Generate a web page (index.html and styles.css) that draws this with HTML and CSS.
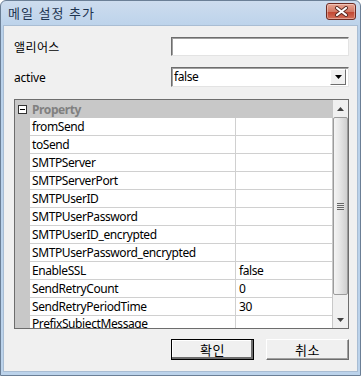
FILE: index.html
```html
<!DOCTYPE html>
<html lang="ko">
<head>
    <meta charset="UTF-8">
    <title>메일 설정 추가</title>
    <link rel="stylesheet" href="styles.css">
</head>
<body>
    <div class="window">
        <div class="titlebar">
            <span class="title">메일 설정 추가</span>
            <div class="close-btn">
                <svg width="15" height="11" viewBox="0 0 15 11">
                    <path d="M3 2 L12 9 M12 2 L3 9" stroke="#5a2a22" stroke-width="4" stroke-linecap="round"/>
                    <path d="M3 2 L12 9 M12 2 L3 9" stroke="#ffffff" stroke-width="2.2" stroke-linecap="round"/>
                </svg>
            </div>
        </div>

        <div class="content">
            <div class="form-row">
                <label class="form-label">앨리어스</label>
                <div class="textbox"></div>
            </div>
            <div class="form-row row-select">
                <label class="form-label latin">active</label>
                <div class="combo">
                    <span class="combo-text">false</span>
                    <span class="combo-btn">
                        <svg width="7" height="4" viewBox="0 0 7 4"><path d="M0 0 H7 L3.5 4 Z" fill="#000"/></svg>
                    </span>
                </div>
            </div>

            <div class="grid">
                <div class="grid-body">
                    <div class="grid-header">
                        <span class="toggle"><span class="minus"></span></span>
                        <span class="category">Property</span>
                    </div>
                    <div class="grid-row"><span class="cell name">fromSend</span><span class="cell value"></span></div>
                    <div class="grid-row"><span class="cell name">toSend</span><span class="cell value"></span></div>
                    <div class="grid-row"><span class="cell name">SMTPServer</span><span class="cell value"></span></div>
                    <div class="grid-row"><span class="cell name">SMTPServerPort</span><span class="cell value"></span></div>
                    <div class="grid-row"><span class="cell name">SMTPUserID</span><span class="cell value"></span></div>
                    <div class="grid-row"><span class="cell name">SMTPUserPassword</span><span class="cell value"></span></div>
                    <div class="grid-row"><span class="cell name">SMTPUserID_encrypted</span><span class="cell value"></span></div>
                    <div class="grid-row"><span class="cell name">SMTPUserPassword_encrypted</span><span class="cell value"></span></div>
                    <div class="grid-row"><span class="cell name">EnableSSL</span><span class="cell value">false</span></div>
                    <div class="grid-row"><span class="cell name">SendRetryCount</span><span class="cell value">0</span></div>
                    <div class="grid-row"><span class="cell name">SendRetryPeriodTime</span><span class="cell value">30</span></div>
                    <div class="grid-row grid-row-last"><span class="cell name">PrefixSubjectMessage</span><span class="cell value"></span></div>
                </div>
                <div class="scrollbar">
                    <span class="arrow">
                        <svg width="7" height="4" viewBox="0 0 7 4"><path d="M3.5 0 L7 4 H0 Z" fill="#404040"/></svg>
                    </span>
                    <div class="track">
                        <div class="thumb">
                            <span class="grip"></span>
                        </div>
                    </div>
                    <span class="arrow">
                        <svg width="7" height="4" viewBox="0 0 7 4"><path d="M0 0 H7 L3.5 4 Z" fill="#404040"/></svg>
                    </span>
                </div>
            </div>

            <div class="buttons">
                <button class="btn btn-default">확인</button>
                <button class="btn">취소</button>
            </div>
        </div>
    </div>
</body>
</html>
```

FILE: styles.css
```css
/* General Styling */
* {
    margin: 0;
    padding: 0;
    box-sizing: border-box;
}

body {
    font-family: "Noto Sans", "Noto Sans CJK KR", sans-serif;
    font-size: 12px;
    letter-spacing: -0.4px;
    background: #ffffff;
}

/* Window frame */
.window {
    width: 361px;
    height: 376px;
    display: flex;
    flex-direction: column;
    border: 1px solid #6b7f96;
    border-radius: 6px 6px 0 0;
    background: linear-gradient(to bottom, #cddcee, #b9d1ea 30px, #bcd3eb);
    padding: 0 2px 3px 2px;
}

.titlebar {
    height: 24px;
    display: flex;
    align-items: center;
    justify-content: space-between;
    padding: 0 2px 0 5px;
}

.title {
    font-family: "Noto Sans CJK KR", sans-serif;
    font-size: 13px;
    color: #1e3450;
    letter-spacing: 1px;
    margin-top: -2px;
}

.close-btn {
    width: 30px;
    height: 17px;
    margin-top: -3px;
    display: flex;
    align-items: center;
    justify-content: center;
    border: 1px solid #6e2b22;
    border-radius: 3px;
    background: linear-gradient(to bottom, #e8a492, #d27a66 50%, #c0442f 51%, #d3705a);
    box-shadow: inset 0 0 0 1px rgba(255, 255, 255, 0.35);
}

/* Content */
.content {
    flex: 1;
    display: flex;
    flex-direction: column;
    background: #f0f0f0;
    border: 1px solid #a9bdd3;
    padding: 11px 8px 0 10px;
}

.form-row {
    display: flex;
    align-items: center;
    justify-content: space-between;
    height: 19px;
}

.row-select {
    height: 20px;
    margin-top: 11px;
}

.form-label {
    font-family: "Noto Sans CJK KR", sans-serif;
    font-size: 12px;
    letter-spacing: 0.4px;
    color: #000;
}

.form-label.latin {
    font-family: "Noto Sans", sans-serif;
    letter-spacing: -0.2px;
}

.textbox {
    width: 178px;
    height: 19px;
    background: #fff;
    border: 1px solid;
    border-color: #6d6d6d #e3e3e3 #e3e3e3 #6d6d6d;
    box-shadow: inset 1px 1px 0 #a0a0a0;
}

.combo {
    width: 178px;
    height: 20px;
    display: flex;
    align-items: center;
    justify-content: space-between;
    background: #fff;
    border: 1px solid;
    border-color: #6d6d6d #e3e3e3 #e3e3e3 #6d6d6d;
    box-shadow: inset 1px 1px 0 #a0a0a0;
    padding: 0 2px 0 2px;
}

.combo-text {
    color: #000;
    line-height: 16px;
}

.combo-btn {
    width: 16px;
    height: 16px;
    display: flex;
    align-items: center;
    justify-content: center;
    background: #f0f0f0;
    border: 1px solid;
    border-color: #ffffff #6d6d6d #6d6d6d #ffffff;
}

/* Property grid */
.grid {
    margin-top: 12px;
    height: 230px;
    display: flex;
    border: 1px solid #6d6d6d;
    background: #c8c8c8;
}

.grid-body {
    flex: 1;
    overflow: hidden;
}

.grid-header {
    height: 18px;
    display: flex;
    align-items: center;
    background: #c8c8c8;
}

.toggle {
    width: 15px;
    display: flex;
    justify-content: center;
}

.minus {
    width: 9px;
    height: 9px;
    border: 1px solid #333;
    background: #fff;
    position: relative;
}

.minus::after {
    content: "";
    position: absolute;
    left: 1px;
    right: 1px;
    top: 3px;
    height: 1px;
    background: #000;
}

.category {
    font-weight: bold;
    color: #808080;
    padding-left: 2px;
}

.grid-row {
    height: 18px;
    display: flex;
    margin-left: 15px;
    background: #fff;
    border-bottom: 1px solid #d0d0d0;
}

.cell {
    line-height: 17px;
    white-space: nowrap;
    overflow: hidden;
    color: #000;
}

.grid-row-last .cell {
    line-height: 15px;
}

.name {
    width: 206px;
    padding-left: 2px;
    border-right: 1px solid #d0d0d0;
}

.value {
    flex: 1;
    padding-left: 3px;
}

/* Scrollbar */
.scrollbar {
    width: 16px;
    display: flex;
    flex-direction: column;
    background: #f0f0f0;
    border-left: 1px solid #c8c8c8;
}

.arrow {
    height: 17px;
    display: flex;
    align-items: center;
    justify-content: center;
}

.track {
    flex: 1;
    display: flex;
    flex-direction: column;
}

.thumb {
    height: 178px;
    display: flex;
    align-items: center;
    justify-content: center;
    border: 1px solid #9b9b9b;
    border-radius: 2px;
    background: linear-gradient(to right, #f4f4f4, #e8e8e8 40%, #cfcfcf);
}

.grip {
    width: 7px;
    height: 7px;
    background: repeating-linear-gradient(to bottom, #666 0 1px, #e8e8e8 1px 2px);
}

/* Buttons */
.buttons {
    margin-top: 10px;
    display: flex;
    justify-content: flex-end;
    gap: 12px;
}

.btn {
    width: 83px;
    height: 21px;
    font-family: "Noto Sans CJK KR", sans-serif;
    font-size: 13px;
    letter-spacing: 0.5px;
    color: #000;
    background: #f0f0f0;
    border: 1px solid;
    border-color: #ffffff #6d6d6d #6d6d6d #ffffff;
    box-shadow: inset -1px -1px 0 #a0a0a0;
}

.btn-default {
    outline: 1px solid #000;
    outline-offset: -1px;
    box-shadow: inset -2px -2px 0 #6d6d6d, inset 1px 1px 0 #ffffff;
}
```
